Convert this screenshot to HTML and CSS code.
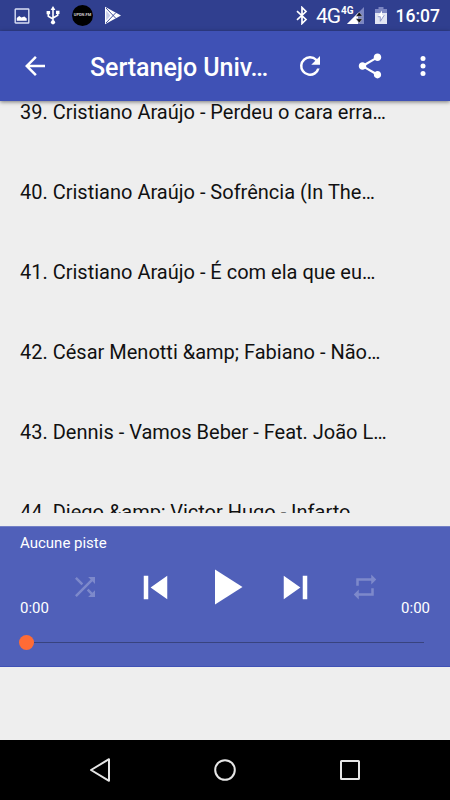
FILE: index.html
```html
<!DOCTYPE html>
<html lang="fr">
<head>
<meta charset="utf-8">
<title>Sertanejo Universitário</title>
<link rel="stylesheet" href="styles.css">
</head>
<body>
<div class="status">
  <div class="notices">
    <svg width="16" height="16" viewBox="0 0 16 16"><rect x="1.2" y="1" width="13.6" height="14" rx=".5" fill="none" stroke="#d9dff5" stroke-width="1.4"/><path d="M2.8 12.7V10l2.4-2 2.2 1.6 3-1 2.3 2v2.1z" fill="#fff"/></svg>
    <svg class="usb" width="14" height="19" viewBox="0 0 14 19"><g fill="none" stroke="#fff" stroke-width="1.6"><path d="M7 3v13M2.3 7v3.2L7 13M11.7 6v3.2L7 12"/></g><path d="M7 0l2.4 4H4.6zM.6 5h3.5v3.2H.6zM10 4.8h3.5V8H10z" fill="#fff"/><circle cx="7" cy="16.3" r="2.1" fill="#fff"/></svg>
    <span class="disc">UPDN.FM</span>
    <svg class="store" width="18" height="19" viewBox="0 0 18 19"><path d="M1 .8L17 9.5 1 18.2z" fill="#fff"/><path d="M2 2l10 10.5M2 17L12 6.5" stroke="#303f8f" stroke-width=".9"/><path d="M2.2 4.5L6.5 9.5l-4.3 5z" fill="#c9cfea"/></svg>
  </div>
  <div class="system">
    <svg class="bt" width="12" height="19" viewBox="0 0 12 19"><path d="M1 5.2l9 8.3-4 4V1.5l4 4-9 8.3" fill="none" stroke="#fff" stroke-width="1.7"/></svg>
    <span class="net">4G</span><span class="net-small">4G</span>
    <svg class="signal" width="19" height="18" viewBox="0 0 19 18"><path d="M18 0v17H1z" fill="#7c86c2"/><path d="M12 6v11H1z" fill="#fff"/><path d="M13.2 5l3.3 4.3H9.9zM13.2 16l3.3-4.3H9.9z" fill="#111" stroke="#ccd" stroke-width=".5"/></svg>
    <svg class="battery" width="12" height="17" viewBox="0 0 12 17"><path d="M3.5 0h5v2H12v5H0V2h3.5z" fill="#7c86c2"/><path d="M0 6h12v11H0z" fill="#e2e5f3"/><path d="M7 3.5L2.8 9.7h2.5v4.6l4-6.2H7z" fill="#fff"/><path d="M2.8 9.7h2.5v4.6l4-6.2" fill="none" stroke="#7c86c2" stroke-width=".8"/></svg>
    <span class="clock">16:07</span>
  </div>
</div>
<header class="appbar">
  <svg class="back" viewBox="0 0 24 24"><path d="M20 11H7.83l5.59-5.59L12 4l-8 8 8 8 1.41-1.41L7.83 13H20v-2z"/></svg>
  <h1>Sertanejo Univ…</h1>
  <svg class="refresh" viewBox="0 0 24 24"><path d="M17.65 6.35A7.96 7.96 0 0 0 12 4a8 8 0 1 0 7.73 10h-2.08A6 6 0 1 1 12 6c1.66 0 3.14.69 4.22 1.78L13 11h7V4z"/></svg>
  <svg class="share" viewBox="0 0 24 24"><path d="M18 16.08c-.76 0-1.44.3-1.96.77L8.91 12.7c.05-.23.09-.46.09-.7s-.04-.47-.09-.7l7.05-4.11c.54.5 1.25.81 2.04.81 1.66 0 3-1.34 3-3s-1.34-3-3-3-3 1.34-3 3c0 .24.04.47.09.7L8.04 9.81C7.5 9.31 6.79 9 6 9c-1.66 0-3 1.34-3 3s1.34 3 3 3c.79 0 1.5-.31 2.04-.81l7.12 4.16c-.05.21-.08.43-.08.65 0 1.61 1.31 2.92 2.92 2.92s2.92-1.31 2.92-2.92-1.31-2.92-2.92-2.92z"/></svg>
  <svg class="more" viewBox="0 0 24 24"><circle cx="12" cy="6" r="2"/><circle cx="12" cy="12" r="2"/><circle cx="12" cy="18" r="2"/></svg>
</header>
<main class="list">
  <ul>
    <li>39. Cristiano Araújo - Perdeu o cara erra…</li>
    <li>40. Cristiano Araújo - Sofrência (In The…</li>
    <li>41. Cristiano Araújo - É com ela que eu…</li>
    <li>42. César Menotti &amp;amp; Fabiano - Não…</li>
    <li>43. Dennis - Vamos Beber - Feat. João L…</li>
    <li>44. Diego &amp;amp; Victor Hugo - Infarto</li>
  </ul>
</main>
<section class="player">
  <div class="track">Aucune piste</div>
  <div class="deck">
    <span class="time">0:00</span>
    <div class="controls">
      <svg class="dim" viewBox="0 0 24 24"><path d="M10.59 9.17L5.41 4 4 5.41l5.17 5.17 1.42-1.41zM14.5 4l2.04 2.04L4 18.59 5.41 20 17.96 7.46 20 9.5V4h-5.5zm.33 9.41l-1.41 1.41 3.13 3.13L14.5 20H20v-5.5l-2.04 2.04-3.13-3.13z"/></svg>
      <svg class="skip" viewBox="0 0 24 24"><path d="M6 6h2.3v12H6zm3.5 6l8.5 6V6z"/></svg>
      <svg class="play" viewBox="0 0 24 24"><path d="M8 5v14l11-7z"/></svg>
      <svg class="skip" viewBox="0 0 24 24"><path d="M6 18l8.5-6L6 6v12zM15.7 6v12H18V6h-2.3z"/></svg>
      <svg class="dim" viewBox="0 0 24 24"><path d="M7 7h10v3l4-4-4-4v3H5v6h2V7zm10 10H7v-3l-4 4 4 4v-3h12v-6h-2v4z"/></svg>
    </div>
    <span class="time">0:00</span>
  </div>
  <div class="seek"><span class="thumb"></span><span class="rail"></span></div>
</section>
<nav class="navbar">
  <svg viewBox="0 0 24 24"><path d="M21 1.2v21.6L3 12z"/></svg>
  <svg viewBox="0 0 24 24"><circle cx="12" cy="12" r="9.8"/></svg>
  <svg viewBox="0 0 24 24"><rect x="3" y="3" width="18" height="18" rx=".5"/></svg>
</nav>
</body>
</html>
```
FILE: styles.css
```css
* { box-sizing: border-box; }
body {
  margin: 0;
  width: 450px;
  height: 800px;
  display: flex;
  flex-direction: column;
  overflow: hidden;
  background: #eee;
  font-family: Roboto, "Liberation Sans", sans-serif;
}
svg { display: block; flex: none; }

.status {
  flex: none;
  height: 31px;
  padding: 0 10px 0 14px;
  display: flex;
  justify-content: space-between;
  background: #303f8f;
  color: #fff;
}
.notices, .system { display: flex; align-items: center; }
.usb { margin-left: 16px; }
.disc {
  width: 21px;
  height: 21px;
  margin-left: 12px;
  border-radius: 50%;
  background: #000;
  color: #ccc;
  font-size: 4px;
  font-weight: 700;
  line-height: 19px;
  text-align: center;
}
.store { margin-left: 11px; }
.net { margin-left: 8px; font-size: 21px; letter-spacing: -1px; }
.net-small { font-size: 10px; font-weight: 700; margin: -11px 0 0 1px; }
.signal { margin-left: -8px; }
.battery { margin-left: 10px; }
.clock { margin-left: 9px; font-size: 17.5px; font-weight: 500; }

.appbar {
  flex: none;
  position: relative;
  height: 70px;
  padding-left: 20px;
  display: flex;
  align-items: center;
  background: #3f51b5;
  color: #fff;
  box-shadow: 0 1px 4px rgba(0, 0, 0, .5);
}
.appbar svg { width: 30px; height: 30px; fill: #fff; }
.appbar h1 {
  width: 205px;
  margin: 3px 0 0;
  padding-left: 40px;
  font-size: 25px;
  font-weight: 500;
  letter-spacing: -.05px;
  white-space: nowrap;
}
.appbar .refresh { margin-left: 40px; }
.appbar .share { margin-left: 30px; }
.appbar .more { margin-left: 22.5px; }

.list { flex: none; height: 412px; overflow: hidden; }
.list ul { margin: -29px 0 0; padding: 0; list-style: none; }
.list li {
  height: 80px;
  padding-left: 20px;
  font-size: 20px;
  line-height: 80px;
  color: #111;
  white-space: nowrap;
}

.player {
  flex: none;
  height: 141px;
  margin-top: 13px;
  padding: 6px 20px 0;
  border-top: 1px solid #7380c5;
  border-bottom: 1px solid #3f51b5;
  background: #5060b9;
  color: #fff;
}
.track { height: 21px; font-size: 15px; line-height: 20px; }
.deck { height: 66px; display: flex; align-items: flex-end; }
.time { width: 30px; padding-bottom: 2px; font-size: 15px; line-height: 20px; }
.time:last-child { text-align: right; }
.controls {
  flex: 1;
  height: 66px;
  display: grid;
  grid-template-columns: repeat(5, 70px);
  place-items: center;
}
.controls svg { fill: #fff; }
.controls .dim { width: 30px; height: 30px; opacity: .26; }
.controls .skip { width: 47px; height: 47px; }
.controls .play { width: 60px; height: 60px; }
.seek { height: 44px; margin-left: -1px; display: flex; align-items: center; }
.thumb { width: 15px; height: 15px; border-radius: 50%; background: #ff6b35; }
.rail { width: 390px; height: 1px; background: #38437f; }

.navbar {
  flex: none;
  height: 60px;
  margin-top: auto;
  padding: 0 37.5px;
  display: grid;
  grid-template-columns: repeat(3, 125px);
  place-items: center;
  background: #000;
}
.navbar svg {
  width: 24px;
  height: 24px;
  fill: none;
  stroke: #e6e6e6;
  stroke-width: 2;
  stroke-linejoin: round;
}
```
